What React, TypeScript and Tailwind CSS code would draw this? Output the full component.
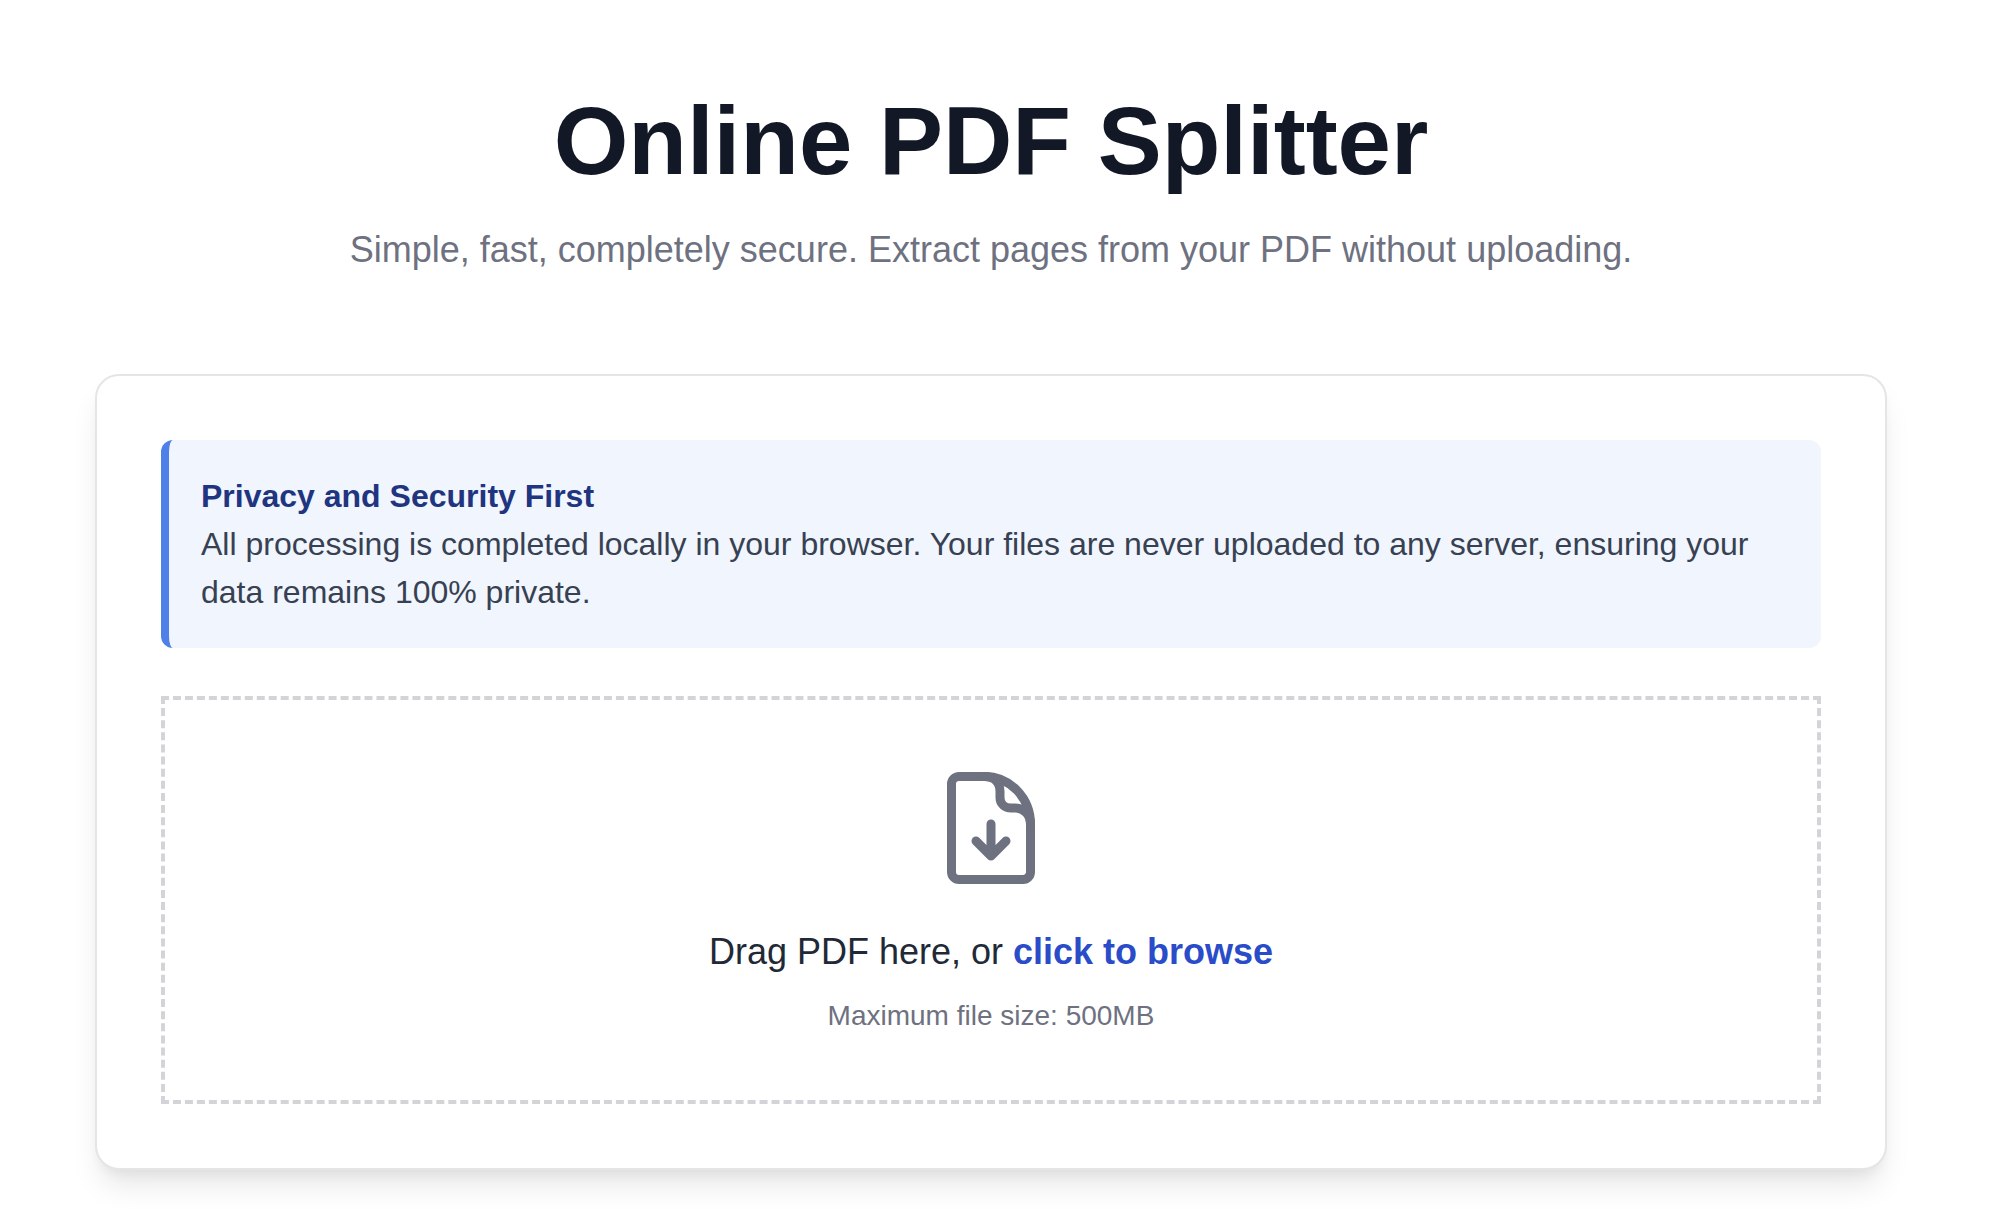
export default function App() {
  return (
    <div className="min-h-[1220px] bg-white pr-[12px] font-['Liberation_Sans',Arial,sans-serif]">
      <div className="mx-auto w-[1792px] pt-[85px]">
        <header className="mb-[102px] text-center">
          <h1 className="text-[96px] leading-[112px] font-bold text-[#121826]">Online PDF Splitter</h1>
          <p className="mt-[31px] text-[36px] leading-[44px] text-[#6e717f]">
            Simple, fast, completely secure. Extract pages from your PDF without uploading.
          </p>
        </header>
        <main className="rounded-[24px] border-2 border-[#e5e5e8] bg-white p-[64px] shadow-[0_20px_30px_-6px_rgba(0,0,0,0.1),0_8px_12px_-4px_rgba(0,0,0,0.05)]">
          <section className="rounded-[12px] border-l-8 border-[#4f7fe8] bg-[#f0f5fe] px-[32px] py-[32px] text-[32px] leading-[48px] text-[#374151]">
            <strong className="block font-bold text-[#213480]">Privacy and Security First</strong>
            All processing is completed locally in your browser. Your files are never uploaded to any server, ensuring your data remains 100% private.
          </section>
          <section className="mt-[48px] flex h-[408px] flex-col items-center border-4 border-dashed border-[#d4d4d8] pt-[68px]">
            <svg width="96" height="120" viewBox="43 28 96 120" fill="none" stroke="#6e717f" strokeWidth="9" strokeLinecap="round" strokeLinejoin="round" className="block">
              <path d="M85 36.5H59a7.500 7.500 0 0 0-7.500 7.500v88a7.500 7.500 0 0 0 7.500 7.500h64a7.500 7.500 0 0 0 7.500-7.500V84C130.500 58 110 36.500 85 36.500Z" />
              <path d="M85 36.500c9 0 15 6 15 15v6c0 6.500 5 10.500 11 10.500h4c9 0 15.500 7 15.500 16" />
              <path d="M91 84v32M76 101l15 15 15-15" />
            </svg>
            <p className="mt-[42px] text-[36px] leading-[44px] text-[#1f2937]">
              Drag PDF here, or <span className="font-bold text-[#2a4cc8]">click to browse</span>
            </p>
            <p className="mt-[24px] text-[28px] leading-[36px] text-[#6e717f]">Maximum file size: 500MB</p>
          </section>
        </main>
      </div>
    </div>
  );
}
